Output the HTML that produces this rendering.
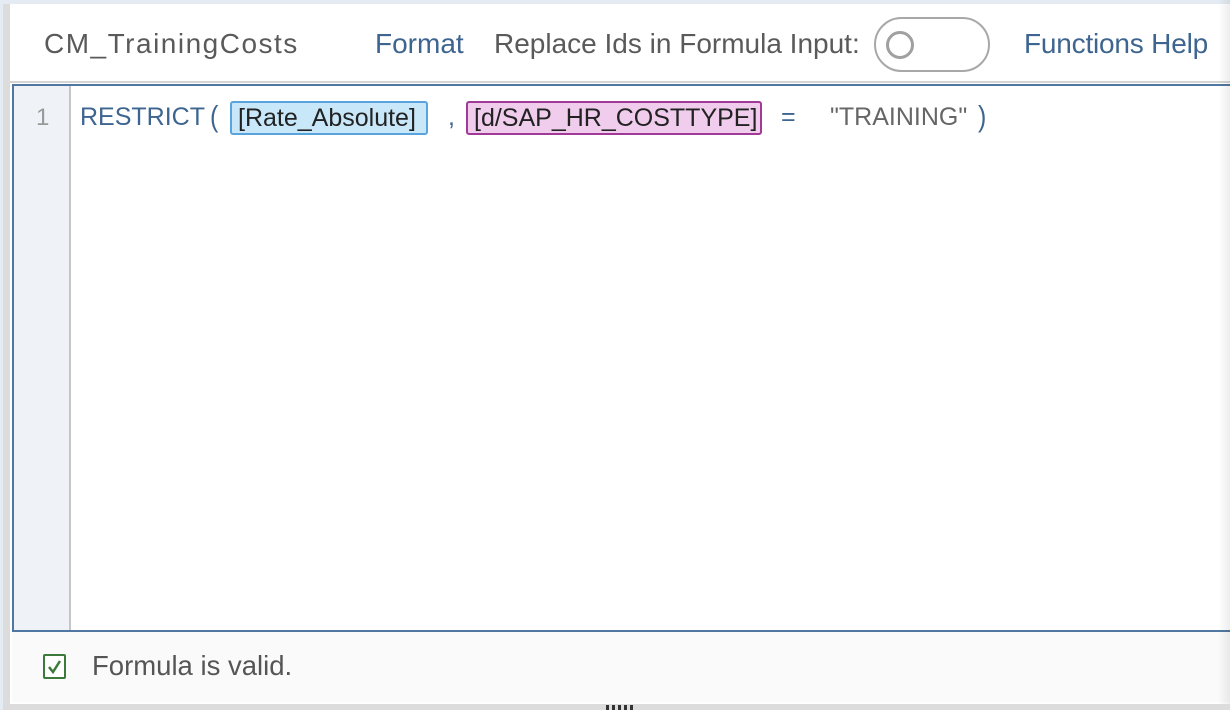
<!DOCTYPE html>
<html><head><style>
*{margin:0;padding:0;box-sizing:border-box}
body{width:1230px;height:710px;background:#dcdcdc;position:relative;overflow:hidden;font-family:"Liberation Sans",sans-serif}
.top{position:absolute;left:0;top:0;width:1230px;height:4px;background:#e4ebf3}
.lstrip{position:absolute;left:0;top:0;width:3px;height:710px;background:#e4ebf3}
.panel{position:absolute;left:10px;top:4px;width:1222px;height:700px;background:#fff}
.hdr{position:absolute;left:0;top:0;width:100%;height:79px;border-bottom:2px solid #d5d5d5}
.t{position:absolute;top:24px;font-size:28px;color:#5a5a5a;white-space:nowrap}
.link{color:#3e6590}
.toggle{position:absolute;left:864px;top:13px;width:116px;height:55px;border:2px solid #a8a8a8;border-radius:28px;background:#fff}
.knob{position:absolute;left:10px;top:12px;width:28px;height:28px;border:3px solid #a0a0a0;border-radius:50%}
.ed{position:absolute;left:2px;top:80px;width:1222px;height:548px;border:2px solid #4f77a1;border-right:none;background:#fff}
.gut{position:absolute;left:0;top:0;width:57px;height:100%;background:#eff3f8;border-right:2px solid #c6c6c6}
.ln{position:absolute;left:22px;top:18px;font-size:24px;color:#999}
.code{position:absolute;left:66px;top:17px;font-size:25px;color:#3e6590;white-space:nowrap}
.code span{position:absolute;top:0}
.b1{background:#c8e8fa;border:2px solid #5aa4dd;color:#222;border-radius:3px;padding:1px 6px;top:-2px!important;width:198px;height:34px}
.b2{background:#f0cdec;border:2px solid #a03a96;color:#222;border-radius:3px;padding:1px 6px;top:-2px!important;width:296px;height:34px}
.ftr{position:absolute;left:2px;top:628px;width:1222px;height:70px;background:#fafafa}
.chk{position:absolute;left:31px;top:22px;width:23px;height:25px;border:2px solid #3b7a3a;border-radius:2px;background:#fff}
.ftxt{position:absolute;left:80px;top:18px;font-size:27.5px;color:#555}
.shade{position:absolute;right:0;top:0;width:12px;height:704px;background:linear-gradient(to right,rgba(0,0,0,0),rgba(0,0,0,0.07))}
.dots{position:absolute;left:606px;top:705px;width:30px;height:5px;background:repeating-linear-gradient(to right,#333 0 3px,transparent 3px 6px)}
</style></head><body>
<div class="top"></div><div class="lstrip"></div>
<div class="panel">
<div class="hdr">
<div class="t" style="left:34px;letter-spacing:1.5px">CM_TrainingCosts</div>
<div class="t link" style="left:365px">Format</div>
<div class="t" style="left:484px">Replace Ids in Formula Input:</div>
<div class="toggle"><div class="knob"></div></div>
<div class="t link" style="left:1014px;letter-spacing:-0.2px">Functions Help</div>
</div>
<div class="ed">
<div class="gut"><div class="ln">1</div></div>
<div class="code">
<span style="left:0">RESTRICT</span>
<span style="left:130px;transform:scaleY(1.2)">(</span>
<span class="b1" style="left:150px">[Rate_Absolute]</span>
<span style="left:368px">,</span>
<span class="b2" style="left:386px">[d/SAP_HR_COSTTYPE]</span>
<span style="left:701px">=</span>
<span style="left:750px;color:#666">"TRAINING"</span>
<span style="left:898px;transform:scaleY(1.2)">)</span>
</div>
</div>
<div class="ftr">
<div class="chk"><svg width="19" height="21" viewBox="0 0 19 21"><path d="M4 11 L8 16 L15 5" stroke="#3b7a3a" stroke-width="2.5" fill="none"/></svg></div>
<div class="ftxt">Formula is valid.</div>
</div>
</div>
<div class="shade"></div>
<div class="dots"></div>
</body></html>
